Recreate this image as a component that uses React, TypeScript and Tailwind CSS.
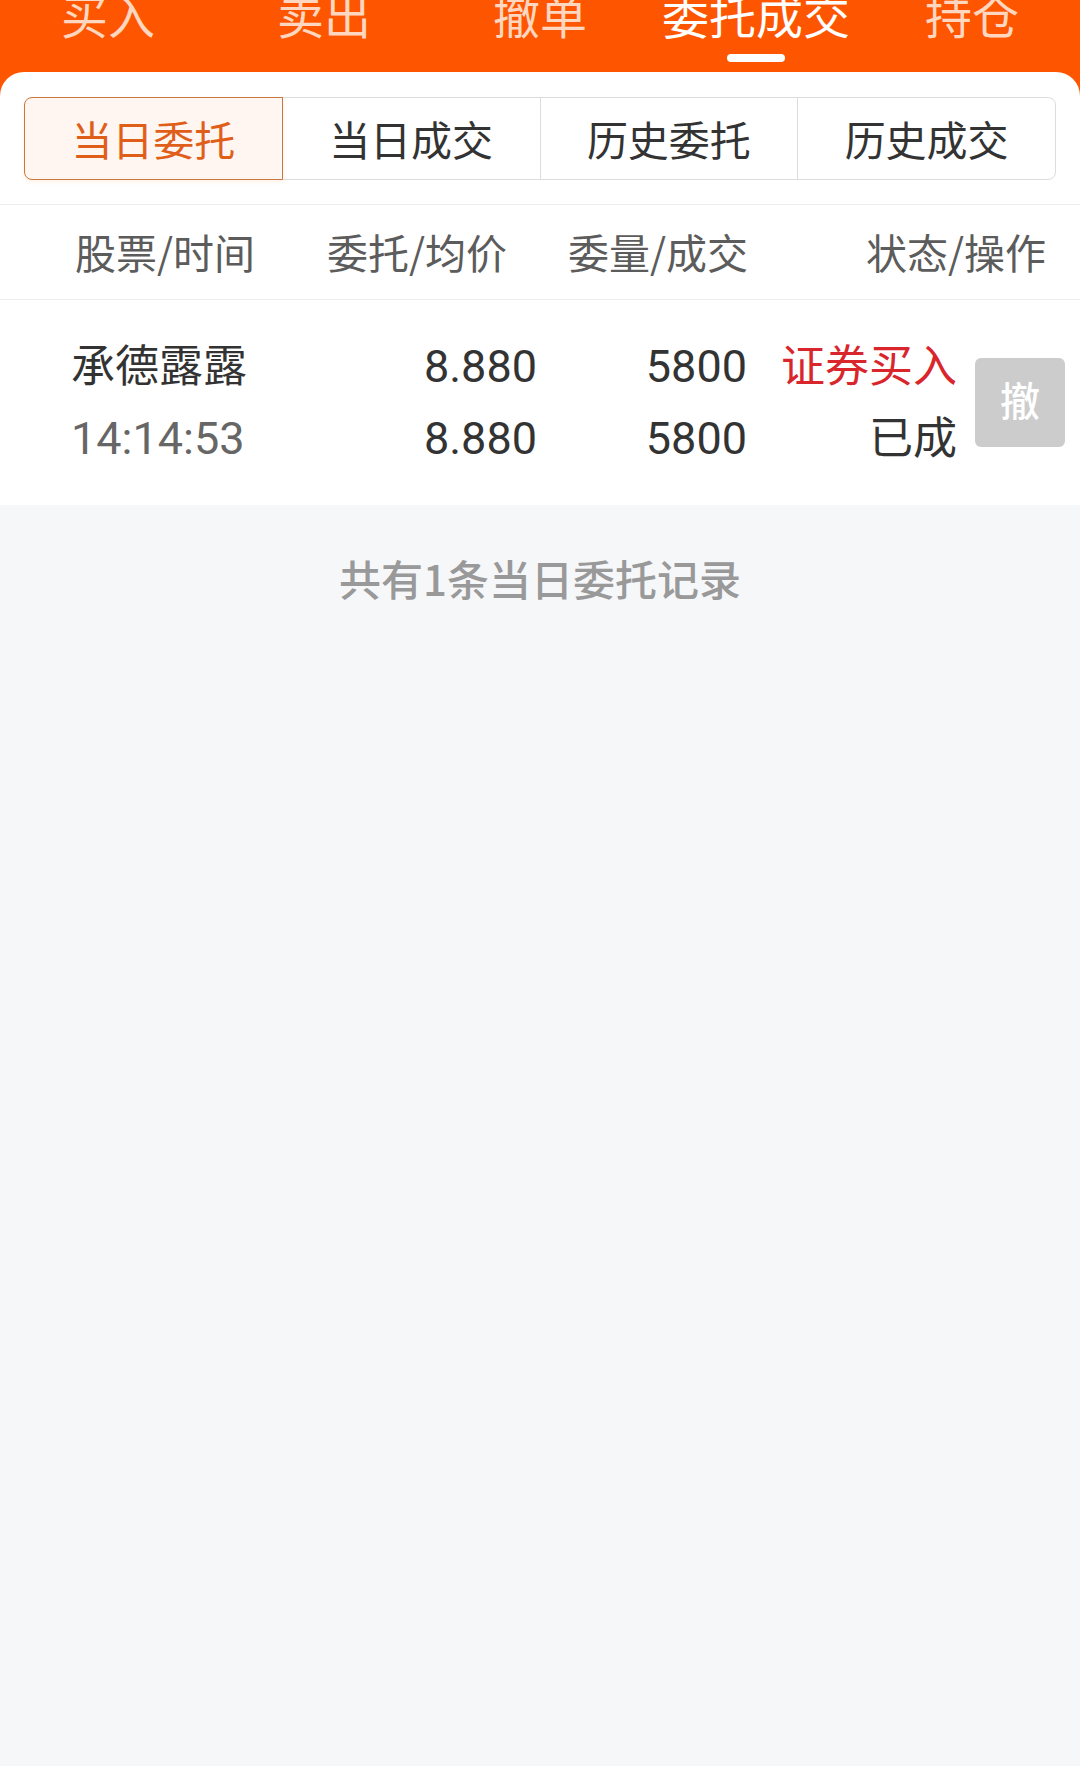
const TOP_TABS = ["买入", "卖出", "撤单", "委托成交", "持仓"];
const SUB_TABS = ["当日委托", "当日成交", "历史委托", "历史成交"];

export default function App() {
  const activeTop = 3;
  const activeSub = 0;

  return (
    <div className="w-[1080px] min-h-[1766px] bg-[#f6f7f9] font-['Noto_Sans_CJK_SC','Noto_Sans',sans-serif]">
      {/* orange header */}
      <div className="h-[100px] bg-[#fe5500] overflow-hidden">
        <div className="grid grid-cols-5 -mt-[10px]">
          {TOP_TABS.map((t, i) => (
            <div key={t} className="flex flex-col items-center">
              <span
                className={`text-[47px] leading-[47px] ${
                  i === activeTop ? "text-white" : "text-[#ffd6bf]"
                }`}
              >
                {t}
              </span>
              <span
                className={`mt-[17px] h-[8px] w-[58px] rounded-full ${
                  i === activeTop ? "bg-white" : "bg-transparent"
                }`}
              />
            </div>
          ))}
        </div>
      </div>

      {/* card */}
      <div className="-mt-[28px] bg-white rounded-t-[24px]">
        <div className="px-[24px] pt-[25px] pb-[24px]">
          <div className="flex h-[83px]">
            {SUB_TABS.map((t, i) => (
              <div
                key={t}
                className={`flex-1 flex items-center justify-center text-[41px] border ${
                  i === 0 ? "rounded-l-[8px]" : "-ml-px"
                } ${i === SUB_TABS.length - 1 ? "rounded-r-[8px]" : ""} ${
                  i === activeSub
                    ? "relative z-10 bg-[#fff6f1] border-[#c9773f] text-[#df5f1a] shadow-[0_2px_4px_rgba(255,160,80,0.15)]"
                    : "bg-white border-[#dcdcdc] text-[#333]"
                }`}
              >
                {t}
              </div>
            ))}
          </div>
        </div>

        <div className="border-t border-[#eeeeee] flex items-center h-[96px] pl-[75px] text-[41px] text-[#5c5c5c] border-b">
          <span className="w-[252px]">股票/时间</span>
          <span className="w-[241px]">委托/均价</span>
          <span className="w-[298px]">委量/成交</span>
          <span>状态/操作</span>
        </div>

        <div className="flex items-center h-[205px] pl-[71px] text-[44px] leading-[72px] text-[#333] font-['Roboto','Noto_Sans_CJK_SC',sans-serif]">
          <div className="w-[200px] flex flex-col">
            <span>承德露露</span>
            <span className="text-[#666] text-[45px]">14:14:53</span>
          </div>
          <div className="w-[266px] flex flex-col items-end text-[45px]">
            <span>8.880</span>
            <span>8.880</span>
          </div>
          <div className="w-[210px] flex flex-col items-end text-[45px]">
            <span>5800</span>
            <span>5800</span>
          </div>
          <div className="w-[210px] flex flex-col items-end">
            <span className="text-[#d9262c]">证券买入</span>
            <span>已成</span>
          </div>
          <button className="ml-[18px] w-[90px] h-[89px] rounded-[6px] bg-[#cccccc] text-white text-[40px] font-medium flex items-center justify-center">
            撤
          </button>
        </div>
      </div>

      <div className="pt-[45px] text-center text-[42px] leading-[56px] font-medium text-[#999]">
        共有1条当日委托记录
      </div>
    </div>
  );
}
